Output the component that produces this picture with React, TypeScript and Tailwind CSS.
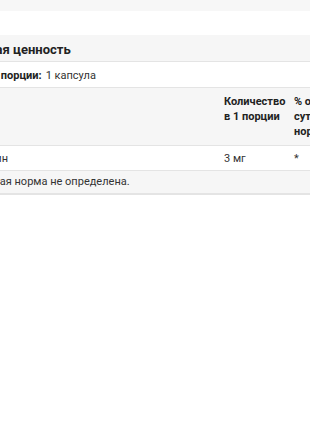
export default function App() {
  return (
    <div
      className="w-[310px] h-[430px] overflow-hidden bg-white text-[#333]"
      style={{ fontFamily: "Roboto, 'Liberation Sans', sans-serif" }}
    >
      <div className="h-[11px] bg-[#f7f7f7]" />
      <div className="mt-[24px] ml-[-55px] w-[540px] text-[11px]">
        <div className="h-[27px] flex items-center px-2 pt-[3px] bg-[#f6f6f6] border-b border-[#e4e4e4] text-[13px] font-bold text-[#222]">
          Пищевая ценность
        </div>
        <div className="h-[26px] flex items-center pl-[14px] pt-[4px] border-b border-[#e4e4e4]">
          <span className="font-bold text-[#222]">Размер порции:</span>
          <span className="ml-1">1 капсула</span>
        </div>
        <div className="flex h-[58px] bg-[#f6f6f6] border-b border-[#e4e4e4] font-bold text-[#222] leading-[15px] pt-[6px]">
          <div className="w-[271px]" />
          <div className="w-[70px] pl-2">Количество в 1 порции</div>
          <div className="w-[70px] pl-2">% от суточной нормы</div>
        </div>
        <div className="flex h-[25px] items-center pt-[3px] border-b border-[#e4e4e4]">
          <div className="w-[271px]">
            <span className="block -ml-[3px]">Астаксантин</span>
          </div>
          <div className="w-[70px] pl-2">3 мг</div>
          <div className="w-[70px] pl-2">*</div>
        </div>
        <div className="h-[24px] flex items-center pl-[14px] pt-[1px] bg-[#f6f6f6] border-b-2 border-[#e4e4e4]">
          *Суточная норма не определена.
        </div>
      </div>
    </div>
  );
}
